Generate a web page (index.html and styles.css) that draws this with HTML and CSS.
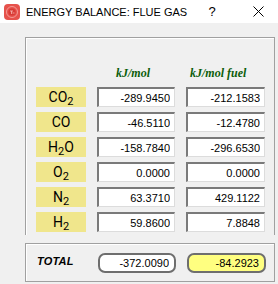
FILE: index.html
```html
<!DOCTYPE html>
<html lang="en">
<head>
    <meta charset="UTF-8">
    <meta name="viewport" content="width=device-width, initial-scale=1.0">
    <title>Energy Balance: Flue Gas</title>
    <link rel="stylesheet" href="styles.css">
</head>
<body>
    <header class="titlebar">
        <svg class="app-icon" width="16" height="16" viewBox="0 0 16 16">
            <rect x="0" y="0" width="16" height="16" rx="4" fill="#e6524c"/>
            <circle cx="8" cy="8" r="5.5" fill="none" stroke="#f49a94" stroke-width="1"/>
            <circle cx="8" cy="8" r="3.6" fill="#d83a34"/>
            <path d="M6 7h3M7.5 7v3M8.5 9h2" stroke="#f7b7b2" stroke-width="0.8" fill="none"/>
        </svg>
        <span class="title">ENERGY BALANCE: FLUE GAS</span>
        <span class="help">?</span>
        <svg class="close" width="11" height="11" viewBox="0 0 11 11">
            <path d="M0.5 0.5L10.5 10.5M10.5 0.5L0.5 10.5" stroke="#000" stroke-width="1"/>
        </svg>
    </header>
    <main class="content">
        <section class="panel">
            <div class="grid">
                <span></span>
                <span class="unit unit-mol">kJ/mol</span>
                <span class="unit unit-fuel">kJ/mol fuel</span>
            </div>
            <div class="grid rows" id="rows"></div>
        </section>
        <section class="total-box">
            <div class="grid">
                <span class="total-label">TOTAL</span>
                <input class="total-field" type="text" readonly value="-372.0090">
                <input class="total-field total-fuel" type="text" readonly value="-84.2923">
            </div>
        </section>
    </main>

    <script>
        const gases = [
            { name: 'CO', sub: '2', mol: '-289.9450', fuel: '-212.1583' },
            { name: 'CO', sub: '', mol: '-46.5110', fuel: '-12.4780' },
            { name: 'H', sub: '2', tail: 'O', mol: '-158.7840', fuel: '-296.6530' },
            { name: 'O', sub: '2', mol: '0.0000', fuel: '0.0000' },
            { name: 'N', sub: '2', mol: '63.3710', fuel: '429.1122' },
            { name: 'H', sub: '2', mol: '59.8600', fuel: '7.8848' }
        ];

        const rows = document.getElementById('rows');

        gases.forEach((gas) => {
            const sub = gas.sub ? `<sub>${gas.sub}</sub>` : '';
            rows.innerHTML += `
                <span class="gas">${gas.name}${sub}${gas.tail || ''}</span>
                <input class="field" type="text" readonly value="${gas.mol}">
                <input class="field" type="text" readonly value="${gas.fuel}">
            `;
        });
    </script>
</body>
</html>
```

FILE: styles.css
```css
body {
    margin: 0;
    padding: 0;
    background-color: #f0f0f0;
    font-family: "Liberation Sans", Arial, sans-serif;
    color: #000;
    width: 278px;
    height: 284px;
    overflow: hidden;
}
.titlebar {
    height: 23px;
    background-color: #ffffff;
    display: flex;
    align-items: center;
    box-sizing: border-box;
    padding: 0 14px 0 4px;
}
.app-icon {
    flex: none;
}
.title {
    flex: 1;
    margin-left: 6px;
    font-size: 11px;
    white-space: nowrap;
}
.help {
    width: 20px;
    margin-right: 31px;
    text-align: center;
    font-size: 13px;
}
.close {
    flex: none;
}
.content {
    padding: 14px 3px 0 25px;
}
.panel {
    border: 1px solid #a0a0a0;
    border-bottom: none;
    box-shadow: inset 1px 1px 0 #ffffff;
    padding: 27px 0 3px 10px;
}
.grid {
    display: grid;
    grid-template-columns: 50px 78px 79px;
    column-gap: 11px;
    align-items: center;
}
.rows {
    margin-top: 6px;
    row-gap: 5px;
}
.unit {
    font-family: "Liberation Serif", "Times New Roman", serif;
    font-weight: bold;
    font-style: italic;
    font-size: 12px;
    line-height: 16px;
    color: #0b5d0b;
}
.unit-mol {
    padding-left: 19px;
}
.unit-fuel {
    padding-left: 4px;
}
.gas {
    height: 20px;
    background-color: #f0e68c;
    text-align: center;
    font-family: "Liberation Sans Narrow", Roboto, "Liberation Sans", sans-serif;
    font-size: 14px;
    line-height: 20px;
}
.gas sub {
    font-size: 11px;
    vertical-align: -3px;
    line-height: 0;
}
.field, .total-field {
    box-sizing: border-box;
    height: 20px;
    width: 100%;
    margin: 0;
    font-family: "Liberation Sans", Arial, sans-serif;
    font-size: 11px;
    text-align: right;
    color: #000;
    outline: none;
}
.field {
    background-color: #ffffff;
    border-top: 2px solid #7a7a7a;
    border-left: 2px solid #7a7a7a;
    border-right: 1px solid #dcdcdc;
    border-bottom: 1px solid #dcdcdc;
    padding: 0 4px 0 0;
}
.total-box {
    margin-top: 8px;
    height: 39px;
    box-sizing: border-box;
    border: 1px solid #a0a0a0;
    box-shadow: inset 1px 1px 0 #ffffff;
    padding: 9px 0 0 11px;
}
.total-label {
    font-weight: bold;
    font-style: italic;
    font-size: 11px;
    letter-spacing: 0.2px;
    margin-top: -4px;
}
.total-field {
    border: 2px solid #6e6e6e;
    border-radius: 7px;
    background-color: #ffffff;
    padding: 0 5px 0 0;
}
.total-fuel {
    background-color: #ffff80;
}
```
